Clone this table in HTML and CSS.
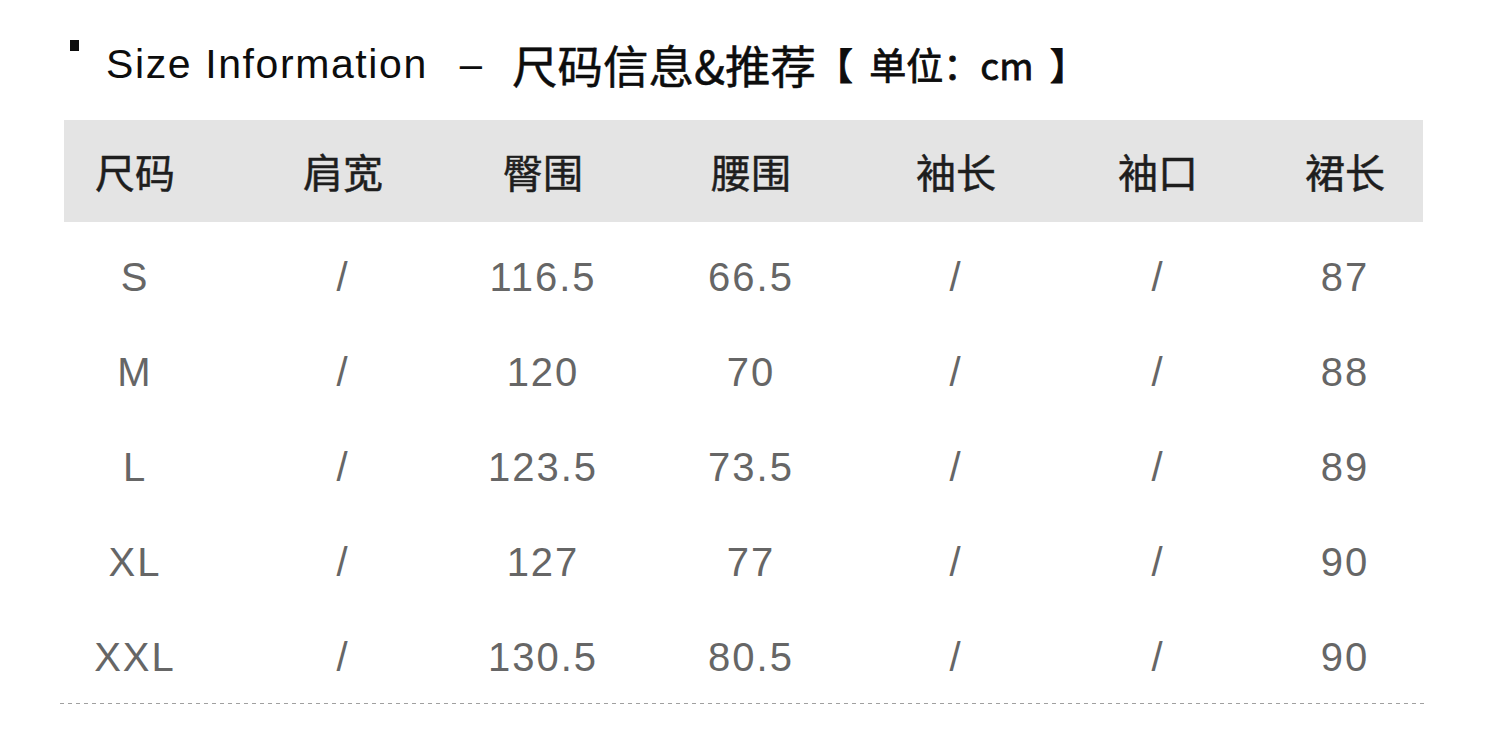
FILE: index.html
```html
<!DOCTYPE html>
<html lang="zh-CN">
<head>
<meta charset="utf-8">
<title>Size Information</title>
<link rel="stylesheet" href="styles.css">
</head>
<body>
<div class="page">
  <h1 class="title">
    <span class="bullet"></span>
    <span class="en">Size Information</span>
    <span class="dash">–</span>
    <span class="zh">尺码信息&amp;推荐</span>
    <span class="unit">【 单位：cm 】</span>
  </h1>
  <div class="table">
    <div class="row head">
      <div class="cell">尺码</div><div class="cell">肩宽</div><div class="cell">臀围</div><div class="cell">腰围</div><div class="cell">袖长</div><div class="cell">袖口</div><div class="cell">裙长</div>
    </div>
    <div class="body">
      <div class="row data"><div class="cell">S</div><div class="cell slash">/</div><div class="cell">116.5</div><div class="cell">66.5</div><div class="cell slash">/</div><div class="cell slash">/</div><div class="cell">87</div></div>
      <div class="row data"><div class="cell">M</div><div class="cell slash">/</div><div class="cell">120</div><div class="cell">70</div><div class="cell slash">/</div><div class="cell slash">/</div><div class="cell">88</div></div>
      <div class="row data"><div class="cell">L</div><div class="cell slash">/</div><div class="cell">123.5</div><div class="cell">73.5</div><div class="cell slash">/</div><div class="cell slash">/</div><div class="cell">89</div></div>
      <div class="row data"><div class="cell">XL</div><div class="cell slash">/</div><div class="cell">127</div><div class="cell">77</div><div class="cell slash">/</div><div class="cell slash">/</div><div class="cell">90</div></div>
      <div class="row data"><div class="cell">XXL</div><div class="cell slash">/</div><div class="cell">130.5</div><div class="cell">80.5</div><div class="cell slash">/</div><div class="cell slash">/</div><div class="cell">90</div></div>
    </div>
  </div>
  <div class="dotted"></div>
</div>
</body>
</html>
```

FILE: styles.css
```css
html, body {
  margin: 0;
  padding: 0;
  background: #ffffff;
}

.page {
  width: 1500px;
  height: 753px;
  padding-top: 34px;
  box-sizing: border-box;
  font-family: "Liberation Sans", "Noto Sans CJK SC", sans-serif;
}

.title {
  display: flex;
  align-items: center;
  height: 60px;
  margin: 0;
  padding-left: 70px;
  font-weight: normal;
  color: #0d0d0d;
}

.bullet {
  align-self: flex-start;
  width: 9px;
  height: 11px;
  margin-top: 6px;
  background: #0d0d0d;
}

.en {
  margin-left: 27px;
  font-size: 41px;
  letter-spacing: 1.6px;
}

.dash {
  margin-left: 32px;
  font-size: 40px;
}

.zh {
  margin-left: 30px;
  font-family: "Noto Sans CJK SC", sans-serif;
  font-size: 45.5px;
  -webkit-text-stroke: 0.5px #0d0d0d;
}

.unit {
  font-family: "Noto Sans CJK SC", sans-serif;
  font-size: 37px;
  word-spacing: 8px;
  -webkit-text-stroke: 0.8px #0d0d0d;
}

.table {
  margin: 26px 0 0 64px;
  width: 1359px;
}

.row {
  display: grid;
  grid-template-columns: 175px 208px 192px 224px 186px 218px 156px;
  align-items: center;
  text-align: center;
}

.row .cell:first-child {
  padding-right: 33px;
}

.head {
  height: 102px;
  background: #e4e4e4;
  font-family: "Noto Sans CJK SC", sans-serif;
  font-size: 40px;
  color: #1e1e1e;
  -webkit-text-stroke: 0.5px #1e1e1e;
}

.body {
  margin-top: 8px;
}

.data {
  height: 95px;
  font-size: 40px;
  letter-spacing: 2px;
  color: #666666;
}

.dotted {
  margin: -2px 0 0 60px;
  width: 1366px;
  height: 1px;
  background: repeating-linear-gradient(to right, #a0a0a0 0 4px, transparent 4px 8px);
}
```
